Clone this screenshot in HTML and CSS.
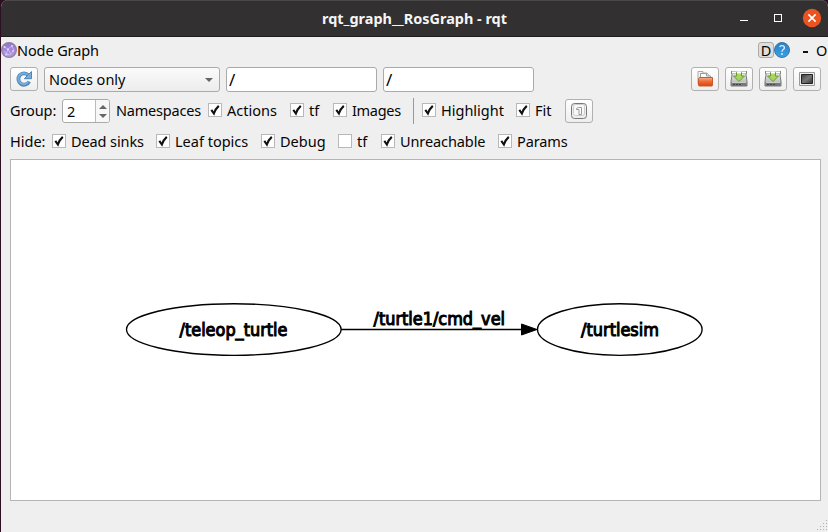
FILE: index.html
```html
<!DOCTYPE html>
<html lang="en">
<head>
<meta charset="utf-8">
<title>rqt_graph__RosGraph - rqt</title>
<link rel="stylesheet" href="styles.css">
</head>
<body>
<svg class="defs" width="0" height="0" aria-hidden="true">
  <defs>
    <linearGradient id="orange" x1="0" y1="0" x2="0" y2="1"><stop offset="0" stop-color="#f6b48e"/><stop offset=".45" stop-color="#ee6c35"/><stop offset="1" stop-color="#d34615"/></linearGradient>
    <linearGradient id="metal" x1="0" y1="0" x2="0" y2="1"><stop offset="0" stop-color="#f4f4f4"/><stop offset="1" stop-color="#aaa"/></linearGradient>
    <linearGradient id="screen" x1="0" y1="0" x2="1" y2="1"><stop offset="0" stop-color="#3c3c3c"/><stop offset=".5" stop-color="#777"/><stop offset="1" stop-color="#333"/></linearGradient>
    <linearGradient id="blue" x1="0" y1="0" x2="0" y2="1"><stop offset="0" stop-color="#2b7fc6"/><stop offset="1" stop-color="#35a3e6"/></linearGradient>
    <linearGradient id="purple" x1="0" y1="0" x2="0" y2="1"><stop offset="0" stop-color="#9472cb"/><stop offset="1" stop-color="#b39bec"/></linearGradient>
  </defs>
  <symbol id="tick" viewBox="1 1 12 12"><path d="M3.300 6.800 5.900 10.500Q7.500 5.800 10.800 2.900" fill="none" stroke="#111" stroke-width="2.100"/></symbol>
  <symbol id="save" viewBox="0 0 18 18">
    <path d="M2.500 1.500h13l1.500 10v4.500H1v-4.500z" fill="url(#metal)" stroke="#777"/>
    <path d="M1.500 12h15v4h-15z" fill="#777"/><path d="M2 12.500h14" stroke="#ccc"/>
    <path d="M3 14.500h2M6 14.500h2M9 14.500h2" stroke="#444"/>
    <path d="M1 1h16v3H1z" fill="#6e9860"/><path d="M2 2.500h14" stroke="#fff" stroke-width="2"/>
    <path d="M6.500 2.500h5V6h3L9 11.500 3.500 6h3z" fill="#a8d55d" stroke="#669a36"/>
    <path d="M7 1.500h4v2H7z" fill="#fff"/>
  </symbol>
</svg>
<div class="window">
  <header class="titlebar">
    <span class="side"></span>
    <svg class="caption" width="188" height="22"><text x="4" y="16" textLength="185" lengthAdjust="spacingAndGlyphs">rqt_graph__RosGraph - rqt</text></svg>
    <div class="side controls">
      <span class="minimize"></span>
      <span class="maximize"></span>
      <svg class="close" width="20" height="20" viewBox="0 0 20 20"><circle cx="10" cy="10" r="9.200" fill="#e95420"/><path d="m6.400 6.400 7.200 7.200m0-7.200-7.200 7.200" stroke="#fff" stroke-width="1.600"/></svg>
    </div>
  </header>

  <div class="dock">
    <svg width="16" height="16" viewBox="0 0 16 16"><circle cx="8" cy="8" r="7.400" fill="url(#purple)" stroke="#8b8498" stroke-width="1.200"/><path d="m3 5 4 2 4-3 2 4-3 4-5 1 2-6m3 5-3-5m-4 2 5 4" fill="none" stroke="#cbbdf0" stroke-width=".8"/><g fill="#ded4fa"><circle cx="3.500" cy="5" r="1"/><circle cx="11" cy="4" r="1"/><circle cx="7" cy="7.500" r="1"/><circle cx="12" cy="9" r=".9"/><circle cx="5" cy="12.500" r=".9"/></g></svg>
    <span class="w-title">Node Graph</span>
    <span class="dock-d">D</span>
    <svg class="help" width="16" height="16" viewBox="0 0 16 16"><circle cx="8" cy="8" r="7.500" fill="url(#blue)" stroke="#3a76a6"/><path d="M5.700 5.200Q6 3.700 8 3.700q2.400 0 2.400 2Q10.400 7 9 7.800 8 8.500 8 9.800" fill="none" stroke="#e2f2fc" stroke-width="1.300"/><circle cx="8" cy="12" r=".9" fill="#e2f2fc"/></svg>
    <span class="dash"></span><span class="dock-o">O</span>
  </div>

  <div class="row row-tools">
    <button class="tool"><svg width="18" height="18" viewBox="0 0 18 18"><path d="M13.300 5.200A5.700 5.700 0 1 0 14.200 11.500" fill="none" stroke="#4f86b8" stroke-width="3.800"/><path d="M16.500 1.500v7.200H9.300z" fill="#79aedb" stroke="#4f86b8"/><path d="M12.700 4.800A5.500 5.500 0 1 0 13.400 11.800" fill="none" stroke="#78addb" stroke-width="2"/></svg></button>
    <div class="combo"><span class="raise w-nodes">Nodes only</span><i class="down"></i></div>
    <div class="field">/</div>
    <div class="field">/</div>
    <div class="file-tools">
      <button class="tool"><svg width="18" height="18" viewBox="0 0 18 18"><path d="M2 14V1.500h5V3h4l2 2.500V7" fill="#f2f2f2" stroke="#aaa"/><path d="M4.500 8V3.500h6V6h4v2" fill="#fff" stroke="#999"/><path d="M3.500 7.500h13v7.500q0 1-1 1h-12q-1 0-1-1V9z" fill="url(#orange)" stroke="#cf582b"/></svg></button>
      <button class="tool"><svg width="18" height="18"><use href="#save"/></svg></button>
      <button class="tool"><svg width="18" height="18"><use href="#save"/></svg></button>
      <button class="tool"><svg width="18" height="18" viewBox="0 0 18 18"><path d="M1.500 2.500h15v13h-15z" fill="#eee" stroke="#999"/><path d="M3.500 4.500h11v9h-11z" fill="url(#screen)" stroke="#222"/></svg></button>
    </div>
  </div>

  <div class="row row-group">
    <span class="raise lead w-group">Group:</span>
    <div class="spin"><span>2</span><div class="arrows"><i class="up"></i><i class="down"></i></div></div>
    <span class="raise ns w-namespaces">Namespaces</span>
    <label class="check"><svg class="box"><use href="#tick"/></svg><span class="w-actions">Actions</span></label>
    <label class="check"><svg class="box"><use href="#tick"/></svg><span class="w-tf">tf</span></label>
    <label class="check"><svg class="box"><use href="#tick"/></svg><span class="w-images">Images</span></label>
    <span class="divider"></span>
    <label class="check"><svg class="box"><use href="#tick"/></svg><span class="w-highlight">Highlight</span></label>
    <label class="check"><svg class="box"><use href="#tick"/></svg><span class="w-fit">Fit</span></label>
    <button class="tool"><svg width="18" height="18" viewBox="0 0 18 18"><rect x="1.500" y="1.500" width="15" height="15" rx="3" fill="#eee" stroke="#777"/><rect x="3.500" y="2.500" width="11" height="11" rx="2" fill="#f8f8f8" stroke="#ccc"/><path d="M6.500 7.500v-1l2-1h3v7h-2.500v-5z" fill="#fff" stroke="#999"/></svg></button>
  </div>

  <div class="row row-hide">
    <span class="lead w-hide">Hide:</span>
    <label class="check"><svg class="box"><use href="#tick"/></svg><span class="w-dead">Dead sinks</span></label>
    <label class="check"><svg class="box"><use href="#tick"/></svg><span class="w-leaf">Leaf topics</span></label>
    <label class="check"><svg class="box"><use href="#tick"/></svg><span class="w-debug">Debug</span></label>
    <label class="check"><svg class="box"></svg><span class="w-tf">tf</span></label>
    <label class="check"><svg class="box"><use href="#tick"/></svg><span class="w-unreachable">Unreachable</span></label>
    <label class="check"><svg class="box"><use href="#tick"/></svg><span class="w-params">Params</span></label>
  </div>

  <main class="graph">
    <svg width="809" height="340" viewBox="11 160 809 340">
      <g fill="none" stroke="#000" stroke-width="1.350">
        <ellipse cx="233.800" cy="329.500" rx="107.300" ry="25.800"/>
        <ellipse cx="619.800" cy="329.500" rx="82.300" ry="25.800"/>
        <path d="M341 329.500h182"/>
      </g>
      <path d="M521.500 324 537 329.500 521.500 335z" stroke="#000"/>
      <g class="names">
        <text x="179.500" y="335.500" textLength="108" lengthAdjust="spacingAndGlyphs">/teleop_turtle</text>
        <text x="373.500" y="324.500" textLength="131.500" lengthAdjust="spacingAndGlyphs">/turtle1/cmd_vel</text>
        <text x="581" y="335.500" textLength="78" lengthAdjust="spacingAndGlyphs">/turtlesim</text>
      </g>
    </svg>
  </main>
  <footer><svg width="12" height="12" viewBox="0 0 12 12"><path d="M10 0h1v1h-1zM7 3h1v1H7zM10 3h1v1h-1zM4 6h1v1H4zM7 6h1v1H7zM10 6h1v1h-1zM1 9h1v1H1zM4 9h1v1H4zM7 9h1v1H7zM10 9h1v1h-1z" fill="#b0b0b0"/></svg></footer>
</div>
</body>
</html>
```

FILE: styles.css
```css
* { box-sizing: border-box; }
body { margin: 0; background: #2c1020; overflow: hidden; }
svg { display: block; flex: none; }
.window {
  width: 827px; height: 532px; margin-left: 1px;
  display: flex; flex-direction: column;
  background: #efefef; color: #050505; overflow: hidden;
  border-radius: 7px 7px 0 0;
  font: 14.5px/20px "Noto Sans", "Open Sans", sans-serif;
  white-space: nowrap;
}
.titlebar {
  height: 37px; flex: none; display: flex; align-items: center;
  background: #323030; border-top: 1px solid #494747; border-bottom: 1px solid #1f1d1e;
}
.side { flex: 1; }
.caption { overflow: visible; }
.caption text { font: bold 14px "Noto Sans", sans-serif; fill: #f5f5f5; }
.controls { display: flex; justify-content: flex-end; align-items: center; padding: 0 6px 1px 0; }
.minimize { width: 8px; height: 1px; background: #fff; margin: 5px 26px 0 0; }
.maximize { width: 8px; height: 8px; border: 1px solid #fff; margin-right: 20px; }
.raise { padding-bottom: 2px; }

.dock { height: 27px; flex: none; display: flex; align-items: center; padding-bottom: 1px; }
.dock-d {
  width: 16px; height: 16px; margin-left: auto; text-align: center; line-height: 15px;
  border: 1px solid #aaa; border-radius: 3px; background: #dedede;
}
.dash { width: 5px; height: 2px; background: #111; margin: 3px 0 0 13px; }
.dock-o { width: 12px; margin-left: 8px; overflow: hidden; }

.row { display: flex; align-items: center; flex: none; padding-left: 9px; }
.row-tools { height: 31px; gap: 6px; padding-right: 7px; }
.row-group { height: 33px; padding-bottom: 1px; }
.row-hide { height: 28px; padding-bottom: 2px; }
.tool {
  width: 28px; height: 24px; padding: 0; display: flex; align-items: center; justify-content: center;
  border: 1px solid #b0b0b0; border-radius: 3px; background: linear-gradient(#fff, #eee);
}
.row-tools .tool { margin-bottom: 1px; }
.combo {
  width: 176px; height: 25px; padding: 0 6px 0 4px; display: flex; align-items: center; justify-content: space-between;
  border: 1px solid #aaa; border-radius: 3px; background: linear-gradient(#fbfbfb, #ececec);
}
.field {
  width: 151px; height: 25px; padding: 0 2px; line-height: 24px; font-size: 17px;
  border: 1px solid #aaa; border-radius: 3px; background: #fff;
}
.file-tools { display: flex; gap: 6px; margin-left: auto; }
.down, .up { width: 0; height: 0; border: 4px solid transparent; }
.down { border-top-color: #666; border-bottom: 0; }
.up { border-bottom-color: #666; border-top: 0; }
.spin {
  width: 48px; height: 24px; margin-left: 6px; display: flex; align-items: center;
  border: 1px solid #aaa; border-radius: 3px; background: #fff; overflow: hidden;
}
.spin > span { flex: 1; padding-left: 4px; }
.arrows {
  width: 14px; height: 22px; display: flex; flex-direction: column; align-items: center; justify-content: center; gap: 5px;
  background: #f7f7f7; border-left: 1px solid #bbb;
}
.ns { margin: 0 8px 0 6px; }
.check { display: flex; align-items: center; margin-right: 12px; }
.box { width: 14px; height: 14px; margin-right: 5px; border: 1px solid #b8b8b8; background: #fff; overflow: visible; }
.row-group .check { margin-bottom: 2px; }
.divider { width: 1px; height: 26px; margin-right: 8px; background: #999; }
.row-hide .lead { margin-right: 7px; }

.w-title { width: 83px; letter-spacing: -.1px; }
.w-nodes { width: 77px; }
.w-group { width: 46px; letter-spacing: -.1px; }
.w-namespaces { width: 84px; letter-spacing: -.2px; }
.w-actions { width: 51px; }
.w-tf { width: 12px; }
.w-images { width: 49px; letter-spacing: -.3px; }
.w-highlight { width: 63px; }
.w-fit { width: 18px; }
.w-hide { width: 35px; }
.w-dead { width: 73px; letter-spacing: -.1px; }
.w-leaf { width: 74px; }
.w-debug { width: 46px; }
.w-unreachable { width: 86px; letter-spacing: -.1px; }
.w-params { width: 50px; letter-spacing: -.1px; }

.graph { height: 342px; margin: 3px 7px 0 9px; flex: none; background: #fff; border: 1px solid #b5b5b5; }
.names text { font: 17px "DejaVu Sans", sans-serif; stroke: #000; stroke-width: 1.05px; }
footer { flex: 1; display: flex; justify-content: flex-end; align-items: flex-end; }
```
